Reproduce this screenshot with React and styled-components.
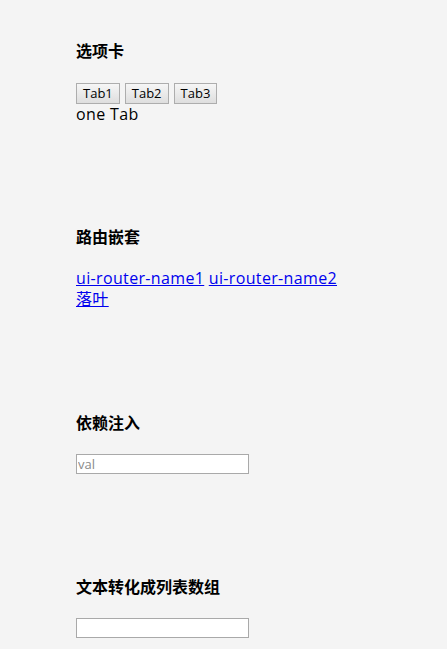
import React, { useState } from 'react';
import styled, { createGlobalStyle } from 'styled-components';

const GlobalStyle = createGlobalStyle`
  html, body {
    margin: 0;
    padding: 0;
    background: #f4f4f4;
  }
  body {
    font-family: "Open Sans", "Noto Sans CJK SC", sans-serif;
    font-size: 16px;
    color: #000;
  }
`;

const Page = styled.div`
  padding: 40px 0 0 76px;
`;

const Section = styled.section`
  padding-bottom: ${(p) => p.$gap || 102}px;
`;

const Heading = styled.h4`
  margin: 0 0 21px;
  font-family: "Noto Sans CJK SC", sans-serif;
  font-size: 16px;
  line-height: 21px;
  font-weight: bold;
`;

const TabBar = styled.div`
  display: flex;
  gap: 5px;
  height: 22px;
  align-items: center;
`;

const TabButton = styled.button`
  height: 21px;
  padding: 0 6px;
  font-family: "Open Sans", sans-serif;
  font-size: 13px;
  line-height: 19px;
  color: #000;
  background: linear-gradient(#f6f6f6, #dedede);
  border: 1px solid #adadad;
  border-radius: 0;
  cursor: pointer;
`;

const Line = styled.div`
  line-height: 21px;
  letter-spacing: 0.35px;
`;

const Link = styled.a`
  color: #0000ee;
  text-decoration: underline;
`;

const TextInput = styled.input`
  display: block;
  box-sizing: border-box;
  width: 173px;
  height: 20px;
  margin: 0;
  padding: 0 1px;
  border: 1px solid #a9a9a9;
  background: #fff;
  font-family: "Open Sans", sans-serif;
  font-size: 13px;

  &::placeholder {
    color: #8a8a8a;
  }
`;

const tabs = { Tab1: 'one Tab', Tab2: 'two Tab', Tab3: 'three Tab' };

export default function App() {
  const [tab, setTab] = useState('Tab1');

  return (
    <Page>
      <GlobalStyle />
      <Section $gap={101}>
        <Heading>选项卡</Heading>
        <TabBar>
          {Object.keys(tabs).map((name) => (
            <TabButton key={name} onClick={() => setTab(name)}>
              {name}
            </TabButton>
          ))}
        </TabBar>
        <Line>{tabs[tab]}</Line>
      </Section>

      <Section>
        <Heading>路由嵌套</Heading>
        <Line>
          <Link href="#">ui-router-name1</Link> <Link href="#">ui-router-name2</Link>
        </Line>
        <Line>
          <Link href="#">落叶</Link>
        </Line>
      </Section>

      <Section>
        <Heading>依赖注入</Heading>
        <TextInput placeholder="val" />
      </Section>

      <Section>
        <Heading>文本转化成列表数组</Heading>
        <TextInput />
      </Section>
    </Page>
  );
}
